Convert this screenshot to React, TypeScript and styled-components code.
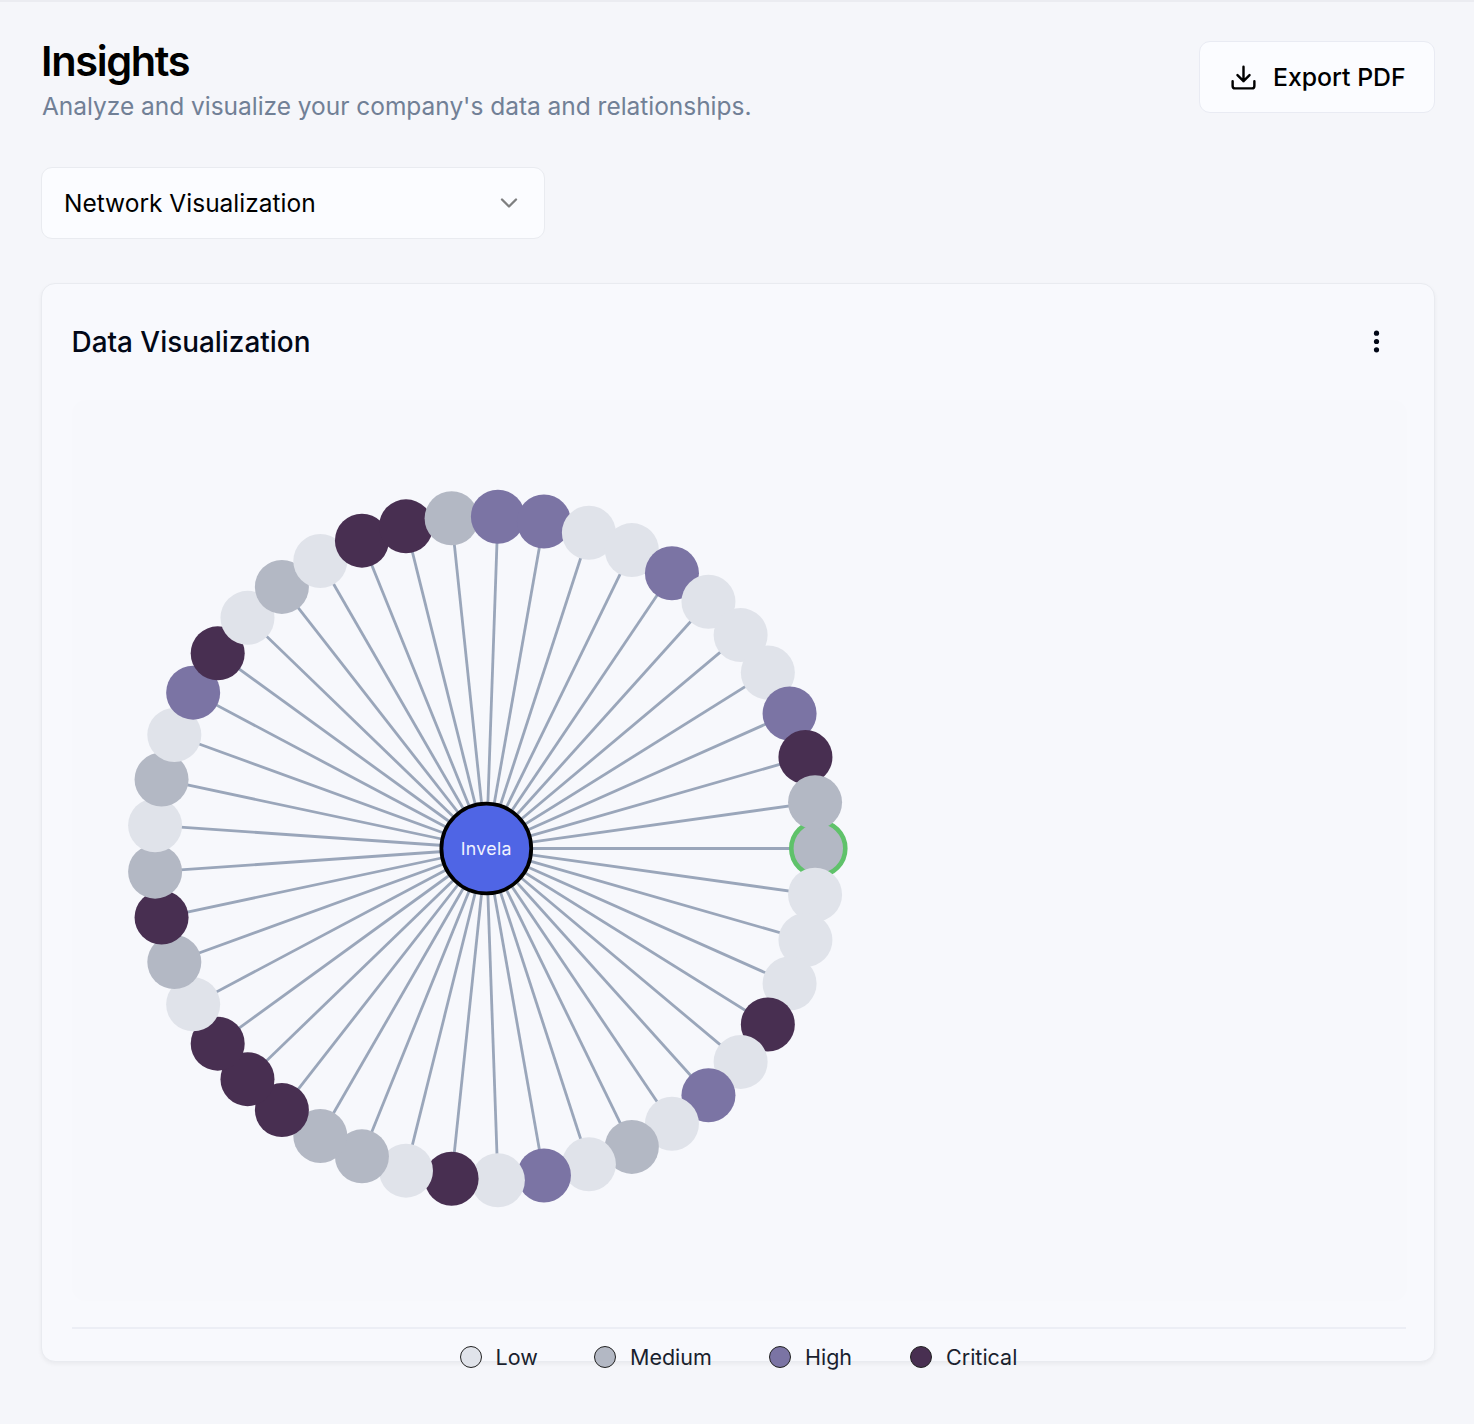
import React from "react";
import styled, { createGlobalStyle } from "styled-components";

type Risk = "low" | "medium" | "high" | "critical";

const riskColors: Record<Risk, string> = {
  low: "#e0e3ea",
  medium: "#b3b8c4",
  high: "#7b74a4",
  critical: "#482f51",
};

const codes: Record<string, Risk> = { L: "low", M: "medium", H: "high", C: "critical" };

/* Companies clockwise around the hub, starting at three o'clock. */
const nodes: Risk[] = "MLLLCLHLMLHLCLMMCCCLMCMLMLHCLMLCCMHHLLHLLLHCM"
  .split("")
  .map((c) => codes[c]);

const legend: { label: string; risk: Risk; width: number }[] = [
  { label: "Low", risk: "low", width: 134.5 },
  { label: "Medium", risk: "medium", width: 175 },
  { label: "High", risk: "high", width: 141 },
  { label: "Critical", risk: "critical", width: 108 },
];

const GlobalStyle = createGlobalStyle`
  *, *::before, *::after { box-sizing: border-box; }
  body {
    margin: 0;
    background: #f5f6fa;
    font-family: Inter, "Liberation Sans", sans-serif;
    color: #020817;
  }
`;

const Page = styled.main`
  height: 1424px;
  padding: 39px 39px 0 41px;
  border-top: 2px solid #ebecf1;
  overflow: hidden;
`;

const Header = styled.header`
  display: flex;
  justify-content: space-between;
  align-items: flex-start;
  height: 126px;
`;

const Title = styled.h1`
  margin: -1px 0 0;
  font-size: 41.5px;
  line-height: 42px;
  font-weight: 600;
  letter-spacing: -1.35px;
  color: #000;
`;

const Subtitle = styled.p`
  margin: 7px 0 0 1px;
  font-size: 24.5px;
  line-height: 34px;
  letter-spacing: -0.03px;
  color: #718096;
  white-space: nowrap;
`;

const ExportButton = styled.button`
  display: flex;
  align-items: center;
  gap: 15px;
  width: 236px;
  height: 72px;
  padding: 0 0 0 29px;
  border: 1.5px solid #e9ebf3;
  border-radius: 11px;
  background: #fbfcff;
  font: 500 24.8px Inter, sans-serif;
  color: #000;
  white-space: nowrap;
`;

const Select = styled.button`
  display: flex;
  align-items: center;
  justify-content: space-between;
  width: 504px;
  height: 72px;
  padding: 0 21px 0 22px;
  border: 1.5px solid #e9ebf0;
  border-radius: 11px;
  background: #fbfcff;
  font: 400 24.5px Inter, sans-serif;
  color: #000;
`;

const Card = styled.section`
  display: flex;
  flex-direction: column;
  height: 1079px;
  margin-top: 44px;
  padding: 0 28px 0 29.5px;
  border: 1.5px solid #e9ebf0;
  border-radius: 14px;
  background: #f8f9fd;
  box-shadow: 0 2px 4px rgba(0, 0, 0, 0.05);
`;

const CardHeader = styled.div`
  display: flex;
  flex: none;
  align-items: center;
  justify-content: space-between;
  height: 116px;
  padding-right: 17px;

  svg {
    margin-bottom: 2px;
  }
`;

const CardTitle = styled.h2`
  margin: 0;
  font-size: 27.9px;
  font-weight: 500;
`;

const Chart = styled.svg`
  display: block;
  flex: none;
  width: 1335px;
  height: 901px;
  border-radius: 14px;
  background: #f7f8fc;
`;

const Legend = styled.div`
  display: flex;
  flex: none;
  justify-content: center;
  margin-top: 26px;
  padding-top: 10px;
  border-top: 2px solid #eceef5;
`;

const LegendItem = styled.div<{ $width: number }>`
  display: flex;
  align-items: center;
  gap: 14px;
  width: ${(p) => p.$width}px;
  height: 36px;
  font-size: 21.5px;
  color: #1a1f2e;
`;

const Swatch = styled.span<{ $risk: Risk }>`
  width: 22px;
  height: 22px;
  border: 1.4px solid #222;
  border-radius: 50%;
  background: ${(p) => riskColors[p.$risk]};
`;

const CX = 414.3;
const CY = 448.5;
const RADIUS = 332;

const points = nodes.map((risk, i) => {
  const angle = (i / nodes.length) * Math.PI * 2;
  return { risk, x: CX + RADIUS * Math.cos(angle), y: CY + RADIUS * Math.sin(angle) };
});

function NetworkChart() {
  return (
    <Chart viewBox="0 0 1335 901">
      {points.map((p, i) => (
        <line key={i} x1={CX} y1={CY} x2={p.x} y2={p.y} stroke="#9aa6ba" strokeWidth={2.8} />
      ))}
      {points.map((p, i) => (
        <circle
          key={i}
          cx={p.x}
          cy={p.y}
          r={27}
          fill={riskColors[p.risk]}
          stroke={i === 0 ? "#5fc26a" : "none"}
          strokeWidth={4.6}
        />
      ))}
      <circle cx={CX} cy={CY} r={44.9} fill="#4f65e5" stroke="#000" strokeWidth={3.8} />
      <text
        x={CX}
        y={CY + 6.5}
        textAnchor="middle"
        fontSize="17.8"
        letterSpacing="0.3"
        fill="#f0f2ff"
      >
        Invela
      </text>
    </Chart>
  );
}

const DownloadIcon = () => (
  <svg width="29" height="29" viewBox="0 0 24 24" fill="none" stroke="#000" strokeWidth="2" strokeLinecap="round" strokeLinejoin="round">
    <path d="M21 15v4a2 2 0 0 1-2 2H5a2 2 0 0 1-2-2v-4M7 10l5 5 5-5M12 15V3" />
  </svg>
);

const ChevronIcon = () => (
  <svg width="28" height="28" viewBox="0 0 24 24" fill="none" stroke="#7e7f80" strokeWidth="2" strokeLinecap="round" strokeLinejoin="round">
    <path d="m6 9 6 6 6-6" />
  </svg>
);

const MoreIcon = () => (
  <svg width="25" height="25" viewBox="0 0 24 24" fill="#020817">
    <circle cx="12" cy="4" r="2.5" />
    <circle cx="12" cy="12" r="2.5" />
    <circle cx="12" cy="20" r="2.5" />
  </svg>
);

export default function App() {
  return (
    <>
      <GlobalStyle />
      <Page>
        <Header>
          <div>
            <Title>Insights</Title>
            <Subtitle>Analyze and visualize your company's data and relationships.</Subtitle>
          </div>
          <ExportButton>
            <DownloadIcon />
            Export PDF
          </ExportButton>
        </Header>
        <Select>
          Network Visualization
          <ChevronIcon />
        </Select>
        <Card>
          <CardHeader>
            <CardTitle>Data Visualization</CardTitle>
            <MoreIcon />
          </CardHeader>
          <NetworkChart />
          <Legend>
            {legend.map((item) => (
              <LegendItem key={item.label} $width={item.width}>
                <Swatch $risk={item.risk} />
                {item.label}
              </LegendItem>
            ))}
          </Legend>
        </Card>
      </Page>
    </>
  );
}
